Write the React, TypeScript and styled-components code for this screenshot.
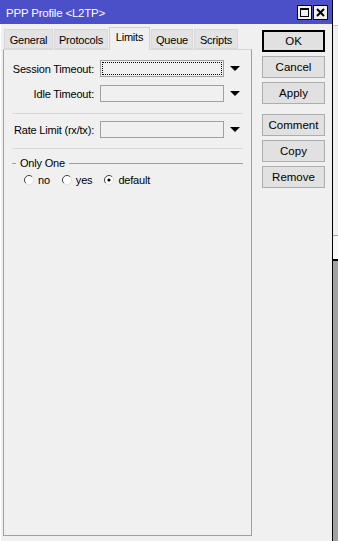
import styled, { createGlobalStyle } from 'styled-components';

const GlobalStyle = createGlobalStyle`
  html, body {
    margin: 0;
    padding: 0;
    background: #ffffff;
  }
  body {
    font-family: "Liberation Sans", Arial, sans-serif;
    font-size: 11px;
    color: #000;
  }
`;

const Screen = styled.div`
  display: flex;
  height: 541px;
  overflow: hidden;
`;

const Window = styled.div`
  width: 332px;
  flex-shrink: 0;
  display: flex;
  flex-direction: column;
  background: #f0f0f0;
  border-right: 1px solid #000;
`;

const TitleBar = styled.div`
  height: 24px;
  flex-shrink: 0;
  display: flex;
  align-items: center;
  padding: 0 4px 0 6px;
  background: #4c50c8;
  color: #fff;
  font-size: 11.5px;
  letter-spacing: -0.2px;
`;

const TitleText = styled.span`
  flex: 1;
  padding-top: 1px;
`;

const TitleButtons = styled.div`
  display: flex;
  gap: 1px;
`;

const TitleButton = styled.div`
  width: 13px;
  height: 13px;
  background: #f0f0f0;
  border: 1px solid #000;
  display: flex;
  align-items: center;
  justify-content: center;
`;

const Body = styled.div`
  flex: 1;
  display: flex;
  border-left: 1px solid #fff;
  padding-left: 2px;
  min-height: 0;
`;

const TabArea = styled.div`
  width: 249px;
  display: flex;
  flex-direction: column;
  padding-top: 3px;
  padding-bottom: 5px;
`;

const TabList = styled.div`
  display: flex;
  align-items: flex-end;
  gap: 1px;
  padding-left: 1px;
  height: 22px;
  position: relative;
  z-index: 1;
`;

const Tab = styled.div<{ $active?: boolean; $width: number }>`
  box-sizing: border-box;
  width: ${(p) => p.$width}px;
  height: ${(p) => (p.$active ? '23px' : '20px')};
  margin-bottom: ${(p) => (p.$active ? '-1px' : '0')};
  padding-top: ${(p) => (p.$active ? '2px' : '3px')};
  text-align: center;
  white-space: nowrap;
  background: ${(p) => (p.$active ? '#f0f0f0' : '#e3e3e3')};
  border: 1px solid ${(p) => (p.$active ? '#d2d2d2' : '#d9d9d9')};
  border-bottom: ${(p) => (p.$active ? 'none' : '1px solid #d9d9d9')};
  line-height: 14px;
  letter-spacing: -0.2px;
`;

const Panel = styled.div`
  flex: 1;
  border: 1px solid #a0a0a0;
  border-top-color: #d9d9d9;
  padding: 10px 8px 0 8px;
  display: flex;
  flex-direction: column;
`;

const FieldRow = styled.div<{ $gap?: number }>`
  display: grid;
  grid-template-columns: 82px 124px 10px;
  column-gap: 6px;
  align-items: center;
  height: 17px;
  margin-top: ${(p) => p.$gap ?? 0}px;
`;

const Label = styled.label`
  text-align: right;
  white-space: nowrap;
  letter-spacing: -0.2px;
`;

const Field = styled.div<{ $focused?: boolean }>`
  box-sizing: border-box;
  height: 17px;
  border: 1px solid #a0a0a0;
  background: #f0f0f0;
  outline: ${(p) => (p.$focused ? '1px dotted #000' : 'none')};
  outline-offset: -3px;
`;

const Separator = styled.div<{ $top: number }>`
  height: 1px;
  background: #d8d8d8;
  margin-top: ${(p) => p.$top}px;
`;

const GroupHeader = styled.div`
  display: flex;
  align-items: center;
  height: 14px;
  margin-top: 7px;
  gap: 4px;
  letter-spacing: -0.2px;
`;

const GroupLine = styled.div<{ $grow?: boolean }>`
  height: 1px;
  background: #a0a0a0;
  width: 4px;
  flex: ${(p) => (p.$grow ? 1 : 'none')};
`;

const RadioRow = styled.div`
  display: flex;
  align-items: center;
  height: 14px;
  margin-top: 3px;
  padding-left: 12px;
  gap: 12px;
  letter-spacing: -0.2px;
`;

const RadioItem = styled.label`
  display: flex;
  align-items: center;
  gap: 4px;
`;

const ButtonColumn = styled.div`
  display: flex;
  flex-direction: column;
  gap: 4px;
  padding-top: 6px;
  margin-left: 10px;
  width: 63px;
`;

const Button = styled.div<{ $default?: boolean; $groupStart?: boolean }>`
  box-sizing: border-box;
  height: 22px;
  display: flex;
  align-items: center;
  justify-content: center;
  background: #e1e1e1;
  border: ${(p) => (p.$default ? '2px solid #000' : '1px solid #adadad')};
  margin-top: ${(p) => (p.$groupStart ? '6px' : '0')};
  font-size: 11.5px;
`;

const SideStrip = styled.div`
  flex: 1;
  display: flex;
  flex-direction: column;
`;

const StripPart = styled.div<{ $h?: number; $bg: string }>`
  height: ${(p) => (p.$h ? `${p.$h}px` : 'auto')};
  flex: ${(p) => (p.$h ? 'none' : 1)};
  background: ${(p) => p.$bg};
`;

const Arrow = () => (
  <svg width="10" height="5" viewBox="0 0 10 5">
    <polygon points="0,0 10,0 5,5" fill="#000" />
  </svg>
);

const Radio = ({ checked }: { checked?: boolean }) => (
  <svg width="10" height="10" viewBox="0 0 10 10">
    <circle cx="5" cy="5" r="4.5" fill="#fff" />
    <path d="M1.8 8.2 A4.5 4.5 0 0 1 8.2 1.8" stroke="#404040" strokeWidth="1" fill="none" />
    <path d="M8.2 1.8 A4.5 4.5 0 0 1 1.8 8.2" stroke="#e0e0e0" strokeWidth="1" fill="none" />
    {checked && <circle cx="5" cy="5" r="1.6" fill="#000" />}
  </svg>
);

const tabs = [
  { name: 'General', width: 49 },
  { name: 'Protocols', width: 54 },
  { name: 'Limits', width: 41 },
  { name: 'Queue', width: 42 },
  { name: 'Scripts', width: 44 },
];

export default function App() {
  return (
    <>
      <GlobalStyle />
      <Screen>
        <Window>
          <TitleBar>
            <TitleText>PPP Profile &lt;L2TP&gt;</TitleText>
            <TitleButtons>
              <TitleButton>
                <svg width="9" height="9" viewBox="0 0 9 9">
                  <rect x="0.5" y="0.5" width="8" height="8" fill="none" stroke="#000" />
                  <rect x="0" y="0" width="9" height="2" fill="#000" />
                </svg>
              </TitleButton>
              <TitleButton>
                <svg width="9" height="9" viewBox="0 0 9 9">
                  <path d="M1 1 L8 8 M8 1 L1 8" stroke="#000" strokeWidth="2" />
                </svg>
              </TitleButton>
            </TitleButtons>
          </TitleBar>
          <Body>
            <TabArea>
              <TabList>
                {tabs.map((t) => (
                  <Tab key={t.name} $width={t.width} $active={t.name === 'Limits'}>
                    {t.name}
                  </Tab>
                ))}
              </TabList>
              <Panel>
                <FieldRow>
                  <Label>Session Timeout:</Label>
                  <Field $focused />
                  <Arrow />
                </FieldRow>
                <FieldRow $gap={8}>
                  <Label>Idle Timeout:</Label>
                  <Field />
                  <Arrow />
                </FieldRow>
                <Separator $top={11} />
                <FieldRow $gap={7}>
                  <Label>Rate Limit (rx/tx):</Label>
                  <Field />
                  <Arrow />
                </FieldRow>
                <Separator $top={10} />
                <GroupHeader>
                  <GroupLine />
                  <span>Only One</span>
                  <GroupLine $grow />
                </GroupHeader>
                <RadioRow>
                  <RadioItem>
                    <Radio />
                    no
                  </RadioItem>
                  <RadioItem>
                    <Radio />
                    yes
                  </RadioItem>
                  <RadioItem>
                    <Radio checked />
                    default
                  </RadioItem>
                </RadioRow>
              </Panel>
            </TabArea>
            <ButtonColumn>
              <Button $default>OK</Button>
              <Button>Cancel</Button>
              <Button>Apply</Button>
              <Button $groupStart>Comment</Button>
              <Button>Copy</Button>
              <Button>Remove</Button>
            </ButtonColumn>
          </Body>
        </Window>
        <SideStrip>
          <StripPart $h={25} $bg="#ffffff" />
          <StripPart $h={1} $bg="#c8c8c8" />
          <StripPart $h={209} $bg="#f0f0f0" />
          <StripPart $h={1} $bg="#a0a0a0" />
          <StripPart $h={23} $bg="#f7f7f7" />
          <StripPart $h={2} $bg="#000000" />
          <StripPart $bg="#a3a3a3" />
        </SideStrip>
      </Screen>
    </>
  );
}
